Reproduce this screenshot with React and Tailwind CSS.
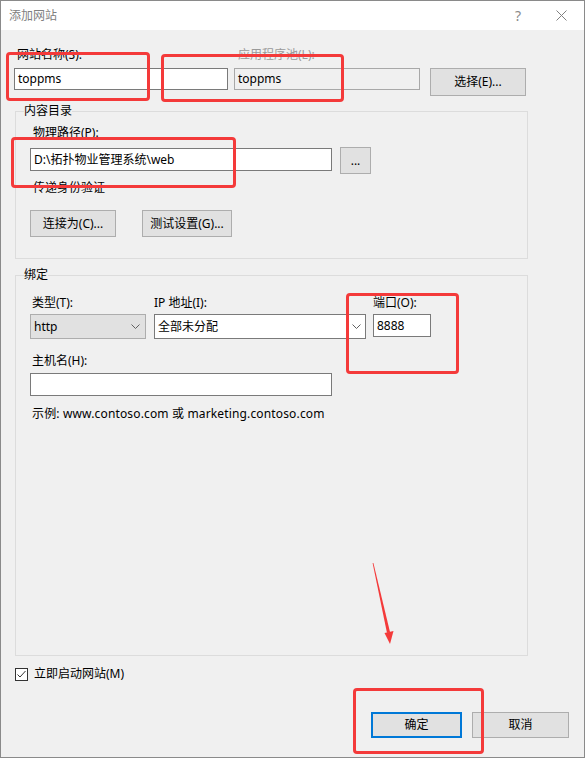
import React from 'react';

const Btn = ({ className = '', children }) => (
  <div className={`flex items-center justify-center bg-[#e1e1e1] border border-[#adadad] ${className}`}>{children}</div>
);

const Field = ({ className = '', children }) => (
  <div className={`flex items-center bg-white border border-[#7a7a7a] pl-[3px] ${className}`}>{children}</div>
);

const Chevron = () => (
  <svg width="9" height="5" viewBox="0 0 9 5" className="shrink-0">
    <polyline points="0.5,0.5 4.5,4.5 8.5,0.5" fill="none" stroke="#606060" strokeWidth="1" />
  </svg>
);

// red marker boxes drawn over the dialog
const marks = [
  'left-[5px] top-[51px] w-[144px] h-[49px]',
  'left-[160px] top-[53px] w-[183px] h-[48px]',
  'left-[10px] top-[136px] w-[225px] h-[51px]',
  'left-[345px] top-[292px] w-[113px] h-[81px]',
  'left-[352px] top-[687px] w-[131px] h-[66px]',
];

export default function App() {
  return (
    <div className="relative w-[585px] h-[758px] border border-[#8a8a8a] bg-[#f0f0f0] flex flex-col text-[12px] leading-[16px] text-black font-['Noto_Sans','Noto_Sans_CJK_SC',sans-serif]">
      {/* title bar */}
      <div className="h-[29px] bg-white flex items-center pl-[8px] shrink-0">
        <span className="text-[#808080]">添加网站</span>
        <div className="ml-auto flex h-full">
          <div className="w-[42px] flex items-center justify-center text-[#8a8a8a] text-[14px]">?</div>
          <div className="w-[45px] flex items-center justify-center">
            <svg width="11" height="11" viewBox="0 0 11 11">
              <path d="M0.5 0.5 L10.5 10.5 M10.5 0.5 L0.5 10.5" stroke="#808080" strokeWidth="1" />
            </svg>
          </div>
        </div>
      </div>

      <div className="pl-[13px] flex flex-col">
        {/* site name / app pool */}
        <div className="mt-[17px] flex">
          <div className="w-[220px] pl-[3px]">网站名称(S):</div>
          <div className="pl-[4px] text-[#9a9a9a]">应用程序池(L):</div>
        </div>
        <div className="mt-[5px] flex items-start">
          <Field className="w-[214px] h-[22px]">toppms</Field>
          <div className="ml-[6px] w-[186px] h-[22px] flex items-center pl-[3px] bg-[#f0f0f0] border border-[#a8a8a8]">toppms</div>
          <Btn className="ml-[10px] w-[96px] h-[28px]">选择(E)...</Btn>
        </div>

        {/* content directory */}
        <fieldset className="mt-[7px] ml-[1px] w-[513px] border border-[#dcdcdc] pl-[14px] pb-[21px]">
          <legend className="-ml-[6px] px-0 leading-[16px]">内容目录</legend>
          <div className="mt-[6px] ml-[3px]">物理路径(P):</div>
          <div className="mt-[6px] flex items-start">
            <Field className="mt-[1px] w-[302px] h-[23px]">D:\拓扑物业管理系统\web</Field>
            <Btn className="ml-[8px] w-[31px] h-[27px]">...</Btn>
          </div>
          <div className="mt-[6px] ml-[3px]">传递身份验证</div>
          <div className="mt-[14px] flex">
            <Btn className="w-[86px] h-[27px]">连接为(C)...</Btn>
            <Btn className="ml-[26px] w-[90px] h-[27px]">测试设置(G)...</Btn>
          </div>
        </fieldset>

        {/* binding */}
        <fieldset className="mt-[8px] ml-[1px] w-[513px] border border-[#dcdcdc] pl-[14px] pb-[233px]">
          <legend className="-ml-[6px] px-0 leading-[16px]">绑定</legend>
          <div className="mt-[12px] flex items-start">
            <div className="w-[116px] flex flex-col">
              <div className="pl-[2px]">类型(T):</div>
              <div className="mt-[3px] h-[25px] flex items-center justify-between pl-[3px] pr-[5px] bg-[#e1e1e1] border border-[#adadad]">
                <span>http</span>
                <Chevron />
              </div>
            </div>
            <div className="ml-[8px] w-[212px] flex flex-col">
              <div>IP 地址(I):</div>
              <div className="mt-[3px] h-[25px] flex items-center justify-between pl-[3px] pr-[4px] bg-white border border-[#7a7a7a]">
                <span>全部未分配</span>
                <Chevron />
              </div>
            </div>
            <div className="ml-[7px] w-[58px] flex flex-col">
              <div>端口(O):</div>
              <Field className="mt-[3px] h-[23px]">8888</Field>
            </div>
          </div>
          <div className="mt-[14px] ml-[2px]">主机名(H):</div>
          <Field className="mt-[4px] w-[302px] h-[23px]" />
          <div className="mt-[10px] ml-[2px] tracking-[0.15px]">示例: www.contoso.com 或 marketing.contoso.com</div>
        </fieldset>

        {/* start immediately */}
        <div className="mt-[10px] flex items-center">
          <div className="ml-[1px] w-[13px] h-[13px] bg-white border border-[#333333] flex items-center justify-center">
            <svg width="11" height="11" viewBox="0 0 11 11">
              <polyline points="1.5,5.5 4,8 9.5,2" fill="none" stroke="#333333" strokeWidth="1" />
            </svg>
          </div>
          <span className="ml-[6px]">立即启动网站(M)</span>
        </div>

        {/* dialog buttons */}
        <div className="mt-[30px] flex">
          <div className="ml-[357px] w-[91px] h-[26px] flex items-center justify-center bg-[#e1e1e1] border-2 border-[#0078d7]">确定</div>
          <Btn className="ml-[10px] w-[97px] h-[26px]">取消</Btn>
        </div>
      </div>

      {marks.map((m) => (
        <div key={m} className={`absolute border-[3px] border-[#f43a3a] rounded-[4px] ${m}`} />
      ))}

      {/* pointer arrow */}
      <svg className="absolute left-[360px] top-[555px]" width="40" height="95" viewBox="0 0 40 95">
        <polygon points="11.6,7 12.4,7 29,76 26,77" fill="#f43a3a" />
        <polygon points="23.5,77 32.5,75 29,88" fill="#f43a3a" />
      </svg>
    </div>
  );
}
